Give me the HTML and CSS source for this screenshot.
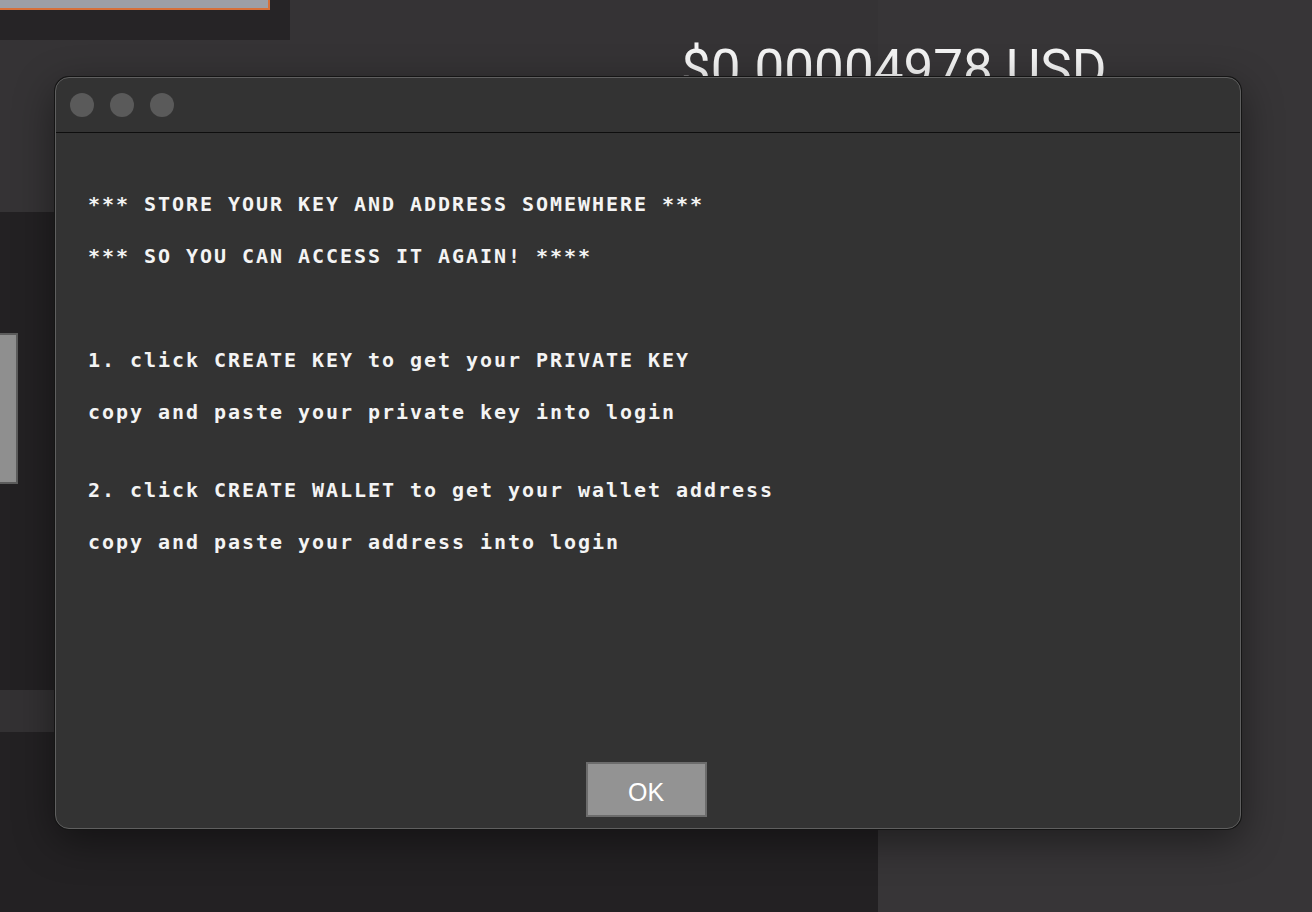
FILE: index.html
```html
<!DOCTYPE html>
<html lang="en">
<head>
<meta charset="utf-8">
<title>Wallet</title>
<link rel="stylesheet" href="styles.css">
</head>
<body>
<div class="app">
  <div class="main">
    <div class="header">
      <div class="topbar"><div class="field"></div></div>
      <div class="price">$0.00004978 USD</div>
    </div>
    <div class="panel">
      <div class="side-btn"></div>
      <div class="strip"></div>
    </div>
  </div>
  <div class="aside"></div>
</div>

<div class="dialog">
  <div class="titlebar">
    <span class="light"></span>
    <span class="light"></span>
    <span class="light"></span>
  </div>
  <div class="dialog-body">
    <div class="line">*** STORE YOUR KEY AND ADDRESS SOMEWHERE ***</div>
    <div class="line">*** SO YOU CAN ACCESS IT AGAIN! ****</div>
    <div class="line blank"></div>
    <div class="line">1. click CREATE KEY to get your PRIVATE KEY</div>
    <div class="line">copy and paste your private key into login</div>
    <div class="half"></div>
    <div class="line">2. click CREATE WALLET to get your wallet address</div>
    <div class="line">copy and paste your address into login</div>
  </div>
  <div class="dialog-foot">
    <button class="ok">OK</button>
  </div>
</div>
</body>
</html>
```

FILE: styles.css
```css
html, body {
  margin: 0;
  padding: 0;
}
body {
  width: 1312px;
  height: 912px;
  overflow: hidden;
  background: #363436;
  font-family: "Liberation Sans", Arial, sans-serif;
  position: relative;
}
.app {
  display: flex;
  height: 912px;
}
.main {
  width: 878px;
  flex-shrink: 0;
  display: flex;
  flex-direction: column;
}
.aside {
  flex: 1;
  background: #373537;
}
.header {
  display: flex;
  height: 212px;
  background: #353335;
}
.topbar {
  width: 290px;
  flex-shrink: 0;
  height: 40px;
  background: #262426;
}
.field {
  width: 268px;
  height: 8px;
  background: #9c9fa6;
  border-right: 2px solid #d6703a;
  border-bottom: 2px solid #d6703a;
}
.price {
  position: relative;
  z-index: 1;
  margin-left: 391px;
  margin-top: 42px;
  font-family: Roboto, "Liberation Sans", sans-serif;
  font-weight: 400;
  font-size: 53px;
  line-height: 54px;
  color: #f4f4f4;
  white-space: nowrap;
}
.panel {
  flex: 1;
  background: #232123;
  display: flex;
  flex-direction: column;
}
.side-btn {
  margin-top: 121px;
  width: 16px;
  height: 147px;
  background: #8f8f8f;
  border: 2px solid #5c5c5c;
  border-left: 0;
}
.strip {
  margin-top: 206px;
  height: 42px;
  background: #333133;
}

.dialog {
  position: absolute;
  z-index: 2;
  left: 55px;
  top: 77px;
  width: 1186px;
  height: 752px;
  box-sizing: border-box;
  background: #333333;
  border: 1px solid #5f5f5f;
  border-radius: 14px;
  box-shadow: 0 0 0 1px #151515, 0 12px 40px rgba(0, 0, 0, 0.45);
  display: flex;
  flex-direction: column;
  overflow: hidden;
}
.titlebar {
  height: 54px;
  border-bottom: 1px solid #0e0e0e;
  display: flex;
  align-items: center;
  gap: 16px;
  padding-left: 14px;
}
.light {
  width: 24px;
  height: 24px;
  border-radius: 50%;
  background: #5a5a5a;
}
.dialog-body {
  flex: 1;
  padding: 45px 0 0 32px;
  font-family: "DejaVu Sans Mono", monospace;
  font-weight: bold;
  font-size: 20px;
  letter-spacing: 1.96px;
  color: #f4f4f4;
}
.line {
  height: 52px;
  line-height: 52px;
  white-space: pre;
}
.half {
  height: 26px;
}
.dialog-foot {
  display: flex;
  justify-content: center;
  padding: 0 4px 11px 0;
}
.ok {
  width: 121px;
  height: 55px;
  box-sizing: border-box;
  background: #939393;
  border: 2px solid #6c6c6c;
  border-radius: 0;
  color: #ffffff;
  font-family: "Liberation Sans", Arial, sans-serif;
  font-size: 25px;
  padding: 5px 0 0 0;
}
```
